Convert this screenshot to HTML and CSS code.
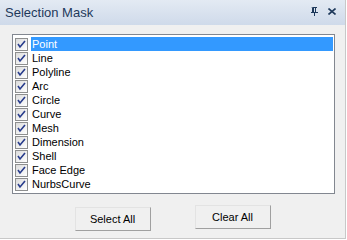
FILE: index.html
```html
<!DOCTYPE html>
<html lang="en">
<head>
    <meta charset="UTF-8">
    <title>Selection Mask</title>
    <link rel="stylesheet" href="styles.css">
</head>
<body>
    <div class="panel">
        <div class="titlebar">
            <span class="title">Selection Mask</span>
            <span class="tools">
                <svg class="pin" width="8" height="9" viewBox="0 0 8 9">
                    <path d="M2 0h4v1h-1v4h2v1h-3v3h-1v-3h-3v-1h1v-4h-1z M3 1v4h1v-4z" fill="#1e395b" fill-rule="evenodd"/>
                </svg>
                <svg class="close" width="8" height="7" viewBox="0 0 8 7">
                    <path d="M0.5 0.5l7 6M7.5 0.5l-7 6" stroke="#1e395b" stroke-width="1.6"/>
                </svg>
            </span>
        </div>

        <div class="content">
            <div class="list">
                <div class="item selected"><span class="check"></span><span class="label">Point</span></div>
                <div class="item"><span class="check"></span><span class="label">Line</span></div>
                <div class="item"><span class="check"></span><span class="label">Polyline</span></div>
                <div class="item"><span class="check"></span><span class="label">Arc</span></div>
                <div class="item"><span class="check"></span><span class="label">Circle</span></div>
                <div class="item"><span class="check"></span><span class="label">Curve</span></div>
                <div class="item"><span class="check"></span><span class="label">Mesh</span></div>
                <div class="item"><span class="check"></span><span class="label">Dimension</span></div>
                <div class="item"><span class="check"></span><span class="label">Shell</span></div>
                <div class="item"><span class="check"></span><span class="label">Face Edge</span></div>
                <div class="item"><span class="check"></span><span class="label">NurbsCurve</span></div>
            </div>

            <div class="buttons">
                <button class="btn btn-low">Select All</button>
                <button class="btn">Clear All</button>
            </div>
        </div>
    </div>
</body>
</html>
```

FILE: styles.css
```css
body {
    margin: 0;
    font-family: "Liberation Sans", Arial, sans-serif;
    background-color: #ffffff;
}
.panel {
    width: 346px;
    height: 239px;
    background-color: #f0f0f0;
    border-right: 1px solid #c8c8c8;
    border-bottom: 1px solid #c8c8c8;
    box-sizing: border-box;
}
.titlebar {
    height: 25px;
    display: flex;
    align-items: center;
    justify-content: space-between;
    padding: 0 9px 0 5px;
    background: linear-gradient(#e3eaf3, #cfdaea);
    box-sizing: border-box;
}
.title {
    font-size: 13px;
    color: #1e395b;
}
.tools {
    display: flex;
    align-items: center;
    gap: 9px;
    padding-bottom: 2px;
}
.content {
    padding: 9px 0 0 12px;
}
.list {
    width: 323px;
    height: 160px;
    border: 1px solid #828790;
    background-color: #ffffff;
    box-sizing: border-box;
    padding: 2px 1px 0 2px;
}
.item {
    height: 14px;
    display: flex;
    align-items: center;
    font-size: 11px;
    color: #000000;
}
.check {
    width: 11px;
    height: 11px;
    border: 1px solid #8e8f8f;
    background: url("data:image/svg+xml,%3Csvg xmlns='http://www.w3.org/2000/svg' width='11' height='11'%3E%3Cpath d='M2 5l2 3l5-6' fill='none' stroke='%23283c8c' stroke-width='1.6'/%3E%3C/svg%3E") no-repeat, linear-gradient(135deg, #dcdcdc, #ffffff);
    flex-shrink: 0;
}
.label {
    margin-left: 3px;
    padding-left: 1px;
    flex: 1;
    height: 14px;
    line-height: 14px;
}
.selected .label {
    background-color: #3399ff;
    color: #ffffff;
}
.buttons {
    display: flex;
    justify-content: center;
    align-items: flex-start;
    gap: 44px;
    margin: 11px 0 0 -12px;
}
.btn {
    width: 76px;
    height: 24px;
    font-family: "Liberation Sans", Arial, sans-serif;
    font-size: 11px;
    color: #000000;
    background-color: #f0f0f0;
    border: 1px solid;
    border-color: #e3e3e3 #a0a0a0 #a0a0a0 #e3e3e3;
    padding: 0;
}
.btn-low {
    margin-top: 2px;
}
```
